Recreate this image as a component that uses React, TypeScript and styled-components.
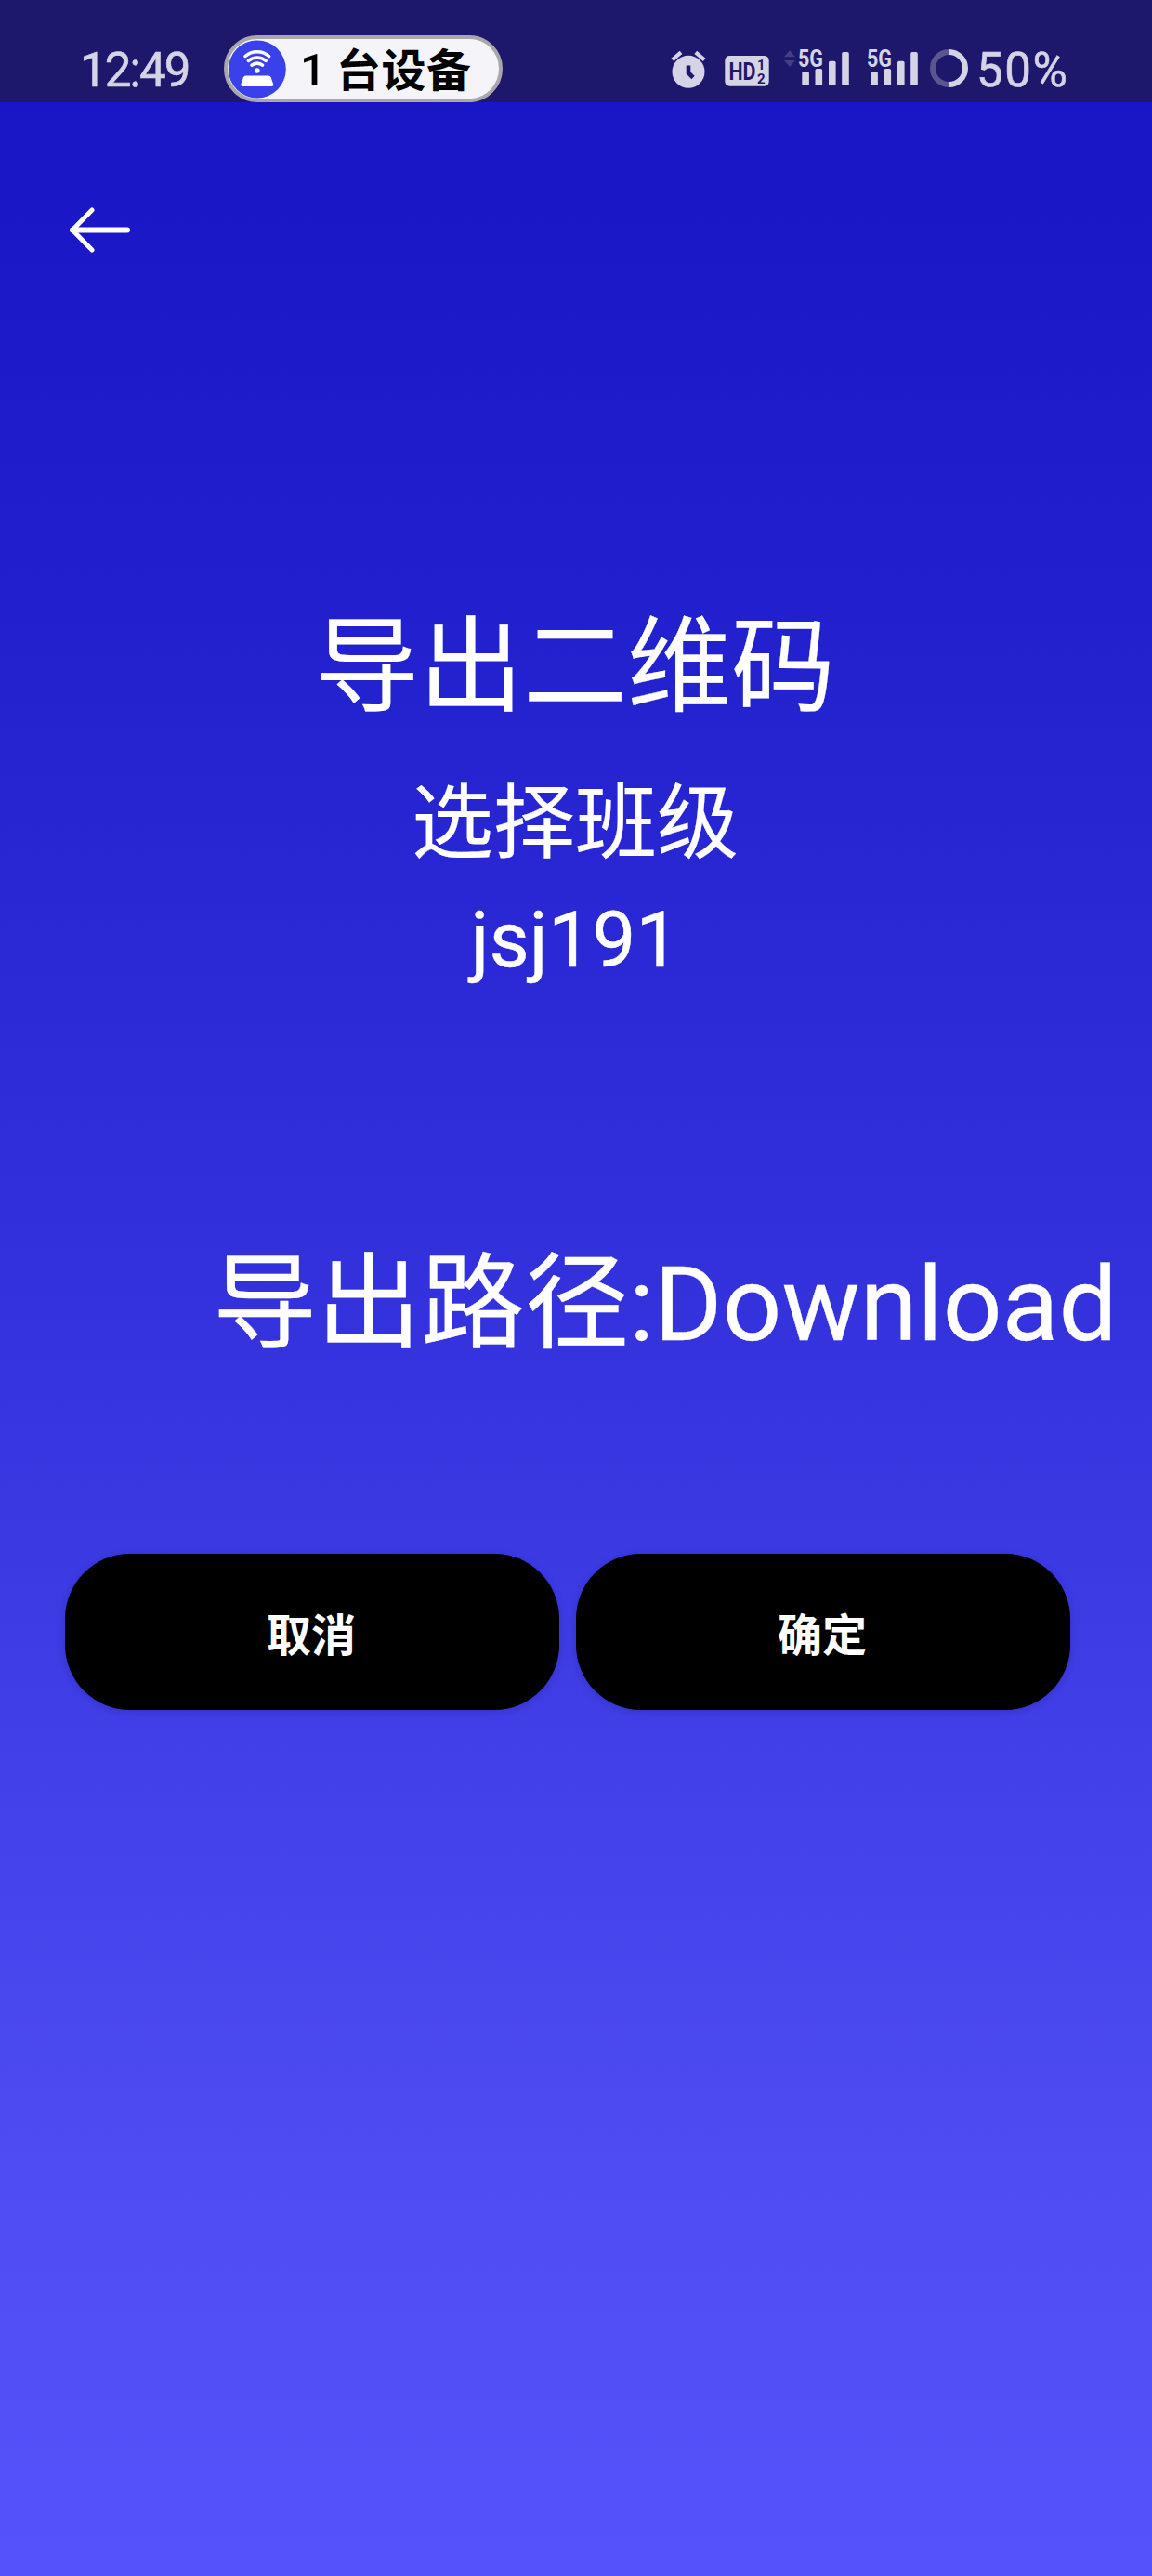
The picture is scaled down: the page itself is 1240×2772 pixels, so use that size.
import React from "react";
import styled, { createGlobalStyle } from "styled-components";

const GlobalStyle = createGlobalStyle`
  * { box-sizing: border-box; }
  body { margin: 0; background: #5452fb; }
`;

const sans = `Roboto, "Noto Sans CJK SC", sans-serif`;
const ink = "#d5d3e6";

const Screen = styled.div`
  width: 1240px;
  height: 2772px;
  overflow: hidden;
  display: flex;
  flex-direction: column;
  color: #fff;
  font-family: ${sans};
  background: linear-gradient(180deg, #1915c4 0%, #1b18c8 10%, #2423d0 28%, #3432dc 51%, #4341e9 70%, #504df5 86%, #5552fb 100%);
`;

const StatusBar = styled.header`
  flex: none;
  height: 110px;
  padding: 36px 86px 0 86px;
  display: flex;
  align-items: flex-start;
  justify-content: space-between;
  background: #1e186c;
  color: ${ink};
`;

const StatusGroup = styled.div`
  display: flex;
  align-items: center;
  height: 76px;
`;

const Clock = styled.span`
  width: 155px;
  padding-top: 3px;
  font-size: 51px;
  line-height: 76px;
  letter-spacing: -1.9px;
  -webkit-text-stroke: 0.6px ${ink};
`;

const DevicePill = styled.div`
  width: 300px;
  height: 72px;
  border: 4px solid #a8a8ac;
  border-radius: 36px;
  background: #f5f5f9;
  display: flex;
  align-items: center;
  color: #000;
  font-size: 48px;
  font-weight: 700;
  line-height: 64px;
`;

const PillCount = styled.span`
  margin-left: 15px;
  padding-top: 3px;
  width: 39px;
  font-size: 49px;
  font-weight: 500;
`;

const PillLabel = styled.span`
  padding-top: 5px;
  letter-spacing: 0.5px;
  white-space: nowrap;
`;

const Battery = styled.span`
  width: 103px;
  padding-top: 3px;
  font-size: 51px;
  line-height: 76px;
  letter-spacing: 1.6px;
  white-space: nowrap;
  -webkit-text-stroke: 0.6px ${ink};
`;

const BackButton = styled.button`
  flex: none;
  margin: 110px 0 0 70px;
  width: 76px;
  height: 56px;
  padding: 0;
  border: 0;
  background: none;
  display: block;
`;

const TextLine = styled.div<{ $size: number; $line: number; $top: number; $stroke: number }>`
  flex: none;
  margin-top: ${(p) => p.$top}px;
  padding-right: 2px;
  font-size: ${(p) => p.$size}px;
  line-height: ${(p) => p.$line}px;
  -webkit-text-stroke: ${(p) => p.$stroke}px #fff;
  text-align: center;
  white-space: nowrap;
`;

const PathLine = styled(TextLine)`
  padding-left: 229px;
  text-align: left;
`;

const Actions = styled.div`
  flex: none;
  margin-top: 188px;
  padding-left: 70px;
  display: flex;
  gap: 18px;
`;

const ActionButton = styled.button`
  width: 532px;
  height: 168px;
  padding: 0 2px 1px 0;
  border: 0;
  border-radius: 70px;
  background: #000;
  color: #fff;
  font-family: ${sans};
  font-size: 48px;
  font-weight: 700;
  box-shadow: 0 2px 8px rgba(20, 20, 90, 0.24);
`;

const Hotspot = () => (
  <svg width="63" height="63" viewBox="0 0 63 63">
    <circle cx="31.8" cy="31.5" r="31" fill="#3b41ea" />
    <g fill="none" stroke="#fff" strokeWidth="3.6" strokeLinecap="round">
      <path d="M19 17.500a19.500 19.500 0 0 1 25.600 0" />
      <path d="M22.400 22.400a14.500 14.500 0 0 1 18.800 0" />
      <path d="M26 27.200a9 9 0 0 1 11.600 0" />
    </g>
    <circle cx="31.800" cy="33" r="2.800" fill="#fff" />
    <path d="M19.500 38.500h24.600q1.800 0 2.500 1.800l2.500 7q.900 2.700-2 2.700H16.500q-2.900 0-2-2.700l2.500-7q.700-1.800 2.500-1.800z" fill="#fff" />
  </svg>
);

const StatusIcons = () => (
  <svg width="332" height="76" viewBox="721 36 332 76" fill={ink}>
    <circle cx="743" cy="77.300" r="17.500" />
    <path d="M725.800 64.300l9.200-8M750.800 56.300l9.400 8" stroke={ink} strokeWidth="4.200" />
    <path d="M743 70.500v8l5 5" fill="none" stroke="#1e186c" strokeWidth="4.600" />
    <rect x="782.300" y="60" width="47.400" height="32.800" rx="5" />
    <g fill="#1e186c" fontFamily="Roboto, sans-serif" fontWeight="700">
      <text x="786.500" y="85.500" fontSize="25.500" textLength="29" lengthAdjust="spacingAndGlyphs">HD</text>
      <text x="817" y="74.500" fontSize="15">1</text>
      <text x="817" y="89.500" fontSize="15">2</text>
    </g>
    <path d="M846 61.300l6-7 6 7zM846 65l6 7 6-7z" fill="#443f84" />
    {[0, 74].map((dx) => (
      <g key={dx} transform={`translate(${dx} 0)`}>
        <text x="861" y="72.200" fontSize="25.400" fontWeight="700" fontFamily="Roboto, sans-serif" textLength="27" lengthAdjust="spacingAndGlyphs">5G</text>
        <rect x="865.300" y="77" width="7.600" height="15" rx="1.800" />
        <rect x="879.500" y="74" width="7.600" height="18" rx="1.800" />
        <rect x="894" y="65.700" width="7.600" height="26.300" rx="1.800" />
        <rect x="908.200" y="56" width="7.600" height="36" rx="1.800" />
      </g>
    ))}
    <g fill="none" strokeWidth="6">
      <path d="M1023.500 56a17.500 17.500 0 0 0 0 35" stroke="#5b568f" />
      <path d="M1023.500 56a17.500 17.500 0 0 1 0 35" stroke={ink} />
    </g>
  </svg>
);

export default function App() {
  return (
    <>
      <GlobalStyle />
      <Screen>
        <StatusBar>
          <StatusGroup>
            <Clock>12:49</Clock>
            <DevicePill>
              <Hotspot />
              <PillCount>1</PillCount>
              <PillLabel>台设备</PillLabel>
            </DevicePill>
          </StatusGroup>
          <StatusGroup>
            <StatusIcons />
            <Battery>50%</Battery>
          </StatusGroup>
        </StatusBar>
        <BackButton aria-label="返回">
          <svg width="76" height="56" viewBox="70 220 76 56" fill="none" stroke="#fff" strokeLinecap="round" strokeLinejoin="round">
            <path d="M78 247.500h59" strokeWidth="6" />
            <path d="M99 226L78 247.500L99 269" strokeWidth="5" />
          </svg>
        </BackButton>
        <TextLine $size={112} $line={160} $top={363} $stroke={0.2}>导出二维码</TextLine>
        <TextLine $size={88} $line={128} $top={23} $stroke={0.2}>选择班级</TextLine>
        <TextLine $size={84} $line={120} $top={2} $stroke={0.4}>jsj191</TextLine>
        <PathLine $size={112} $line={160} $top={252} $stroke={0.3}>导出路径:Download</PathLine>
        <Actions>
          <ActionButton>取消</ActionButton>
          <ActionButton>确定</ActionButton>
        </Actions>
      </Screen>
    </>
  );
}
